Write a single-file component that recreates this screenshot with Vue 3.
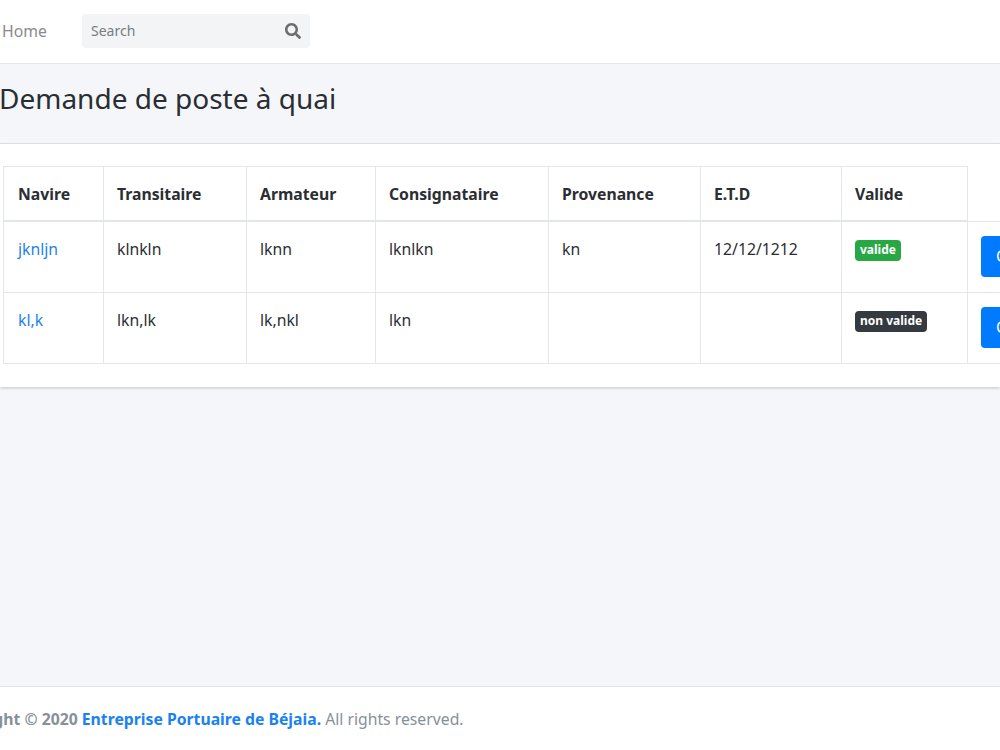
<script setup>
const rows = [
  { navire: 'jknljn', transitaire: 'klnkln', armateur: 'lknn', consignataire: 'lknlkn', provenance: 'kn', etd: '12/12/1212', valide: true },
  { navire: 'kl,k', transitaire: 'lkn,lk', armateur: 'lk,nkl', consignataire: 'lkn', provenance: '', etd: '', valide: false }
];
const heads = ['Navire', 'Transitaire', 'Armateur', 'Consignataire', 'Provenance', 'E.T.D', 'Valide'];
</script>

<template>
  <div class="page">
    <nav class="topbar">
      <a class="home" href="#">Home</a>
      <form class="search" @submit.prevent>
        <input class="search-input" type="text" placeholder="Search" />
        <button class="search-btn" type="button">
          <svg viewBox="0 0 512 512" width="16" height="16">
            <path fill="currentColor" d="M505 442.7L405.3 343c-4.5-4.5-10.6-7-17-7H372c27.6-35.3 44-79.7 44-128C416 93.1 322.9 0 208 0S0 93.1 0 208s93.1 208 208 208c48.3 0 92.7-16.4 128-44v16.3c0 6.4 2.5 12.5 7 17l99.7 99.7c9.4 9.4 24.6 9.4 33.9 0l28.3-28.3c9.4-9.4 9.4-24.6.1-34zM208 336c-70.7 0-128-57.2-128-128 0-70.7 57.2-128 128-128 70.7 0 128 57.2 128 128 0 70.7-57.2 128-128 128z" />
          </svg>
        </button>
      </form>
    </nav>

    <header class="title-bar">
      <h1>Demande de poste à quai</h1>
    </header>

    <section class="card">
      <table class="grid">
        <colgroup>
          <col class="c1" /><col class="c2" /><col class="c3" /><col class="c4" />
          <col class="c5" /><col class="c6" /><col class="c7" /><col class="c8" />
        </colgroup>
        <thead>
          <tr>
            <th v-for="h in heads" :key="h">{{ h }}</th>
          </tr>
        </thead>
        <tbody>
          <tr v-for="r in rows" :key="r.navire">
            <td><a href="#">{{ r.navire }}</a></td>
            <td>{{ r.transitaire }}</td>
            <td>{{ r.armateur }}</td>
            <td>{{ r.consignataire }}</td>
            <td>{{ r.provenance }}</td>
            <td>{{ r.etd }}</td>
            <td>
              <span class="badge" :class="r.valide ? 'ok' : 'ko'">{{ r.valide ? 'valide' : 'non valide' }}</span>
            </td>
            <td class="action"><button class="btn" type="button">Consulter</button></td>
          </tr>
        </tbody>
      </table>
    </section>

    <div class="spacer"></div>

    <footer class="foot">
      <div class="foot-text">
        <strong>Copyright © 2020 <a href="#">Entreprise Portuaire de Béjaia.</a></strong> All rights reserved.
      </div>
    </footer>
  </div>
</template>

<style scoped>
.page {
  width: 1000px;
  height: 750px;
  overflow: hidden;
  display: flex;
  flex-direction: column;
  background: #f4f6f9;
  color: #2a2e33;
  font-family: "Noto Sans", "Open Sans", sans-serif;
  font-size: 15.75px;
}
.topbar {
  height: 63px;
  flex: none;
  background: #fff;
  border-bottom: 1px solid #e2e5e9;
  display: flex;
  align-items: center;
  padding-left: 2px;
}
.home {
  color: #8a8a8a;
  text-decoration: none;
  font-size: 15.75px;
  width: 80px;
  padding-bottom: 2px;
}
.search {
  width: 228px;
  height: 34px;
  background: #f2f4f6;
  border-radius: 4px;
  display: flex;
  align-items: center;
  margin-top: -1px;
}
.search-input {
  flex: 1;
  min-width: 0;
  border: 0;
  outline: 0;
  background: transparent;
  padding: 0 0 2px 9px;
  font: inherit;
  font-size: 14px;
  color: #495057;
}
.search-input::placeholder {
  color: #777d83;
  opacity: 1;
}
.search-btn {
  border: 0;
  background: transparent;
  color: #6c6c6c;
  padding: 0;
  width: 25px;
  height: 34px;
  display: flex;
  align-items: center;
  justify-content: flex-start;
}
.title-bar {
  height: 79px;
  flex: none;
  border-bottom: 1px solid #e2e5e9;
  display: flex;
  align-items: center;
}
h1 {
  margin: -9px 0 0 -1px;
  font-size: 28px;
  font-weight: 400;
  line-height: 1.2;
}
.card {
  flex: none;
  height: 243px;
  box-sizing: border-box;
  background: #fff;
  padding: 22px 0 0 3px;
  box-shadow: 0 1px 3px rgba(0, 0, 0, 0.2);
  overflow: hidden;
}
.grid {
  border-collapse: collapse;
  table-layout: fixed;
  width: 1100px;
}
.c1 { width: 100px; }
.c2 { width: 143px; }
.c3 { width: 129px; }
.c4 { width: 173px; }
.c5 { width: 152px; }
.c6 { width: 141px; }
.c7 { width: 126px; }
.c8 { width: 136px; }
th,
td {
  border: 1px solid #e3e6ea;
  padding: 15px 13px 14px 13px;
  text-align: left;
  vertical-align: top;
  line-height: 24px;
}
th:first-child,
td:first-child {
  padding-left: 14px;
}
th {
  font-weight: 700;
  height: 54px;
  box-sizing: border-box;
  padding-top: 15px;
  border-bottom-width: 2px;
}
td {
  height: 71px;
  box-sizing: border-box;
}
a {
  color: #1a82f0;
  text-decoration: none;
}
.badge {
  display: inline-block;
  font-size: 12px;
  font-weight: 700;
  line-height: 1;
  color: #fff;
  padding: 4px 5px 5px;
  border-radius: 4px;
  vertical-align: top;
  margin-top: 3px;
}
.ok { background: #28a745; }
.ko { background: #343a40; }
.action {
  border-right: 0;
  padding-top: 14px;
}
.btn {
  background: #007bff;
  color: #fff;
  border: 0;
  border-radius: 4px;
  height: 41px;
  padding: 0 15px;
  font: inherit;
}
.spacer {
  flex: 1;
}
.foot {
  height: 63px;
  flex: none;
  background: #fff;
  border-top: 1px solid #e2e5e9;
  display: flex;
  align-items: center;
  color: #869099;
  overflow: hidden;
}
.foot-text {
  margin-left: -57px;
  white-space: nowrap;
}
</style>
